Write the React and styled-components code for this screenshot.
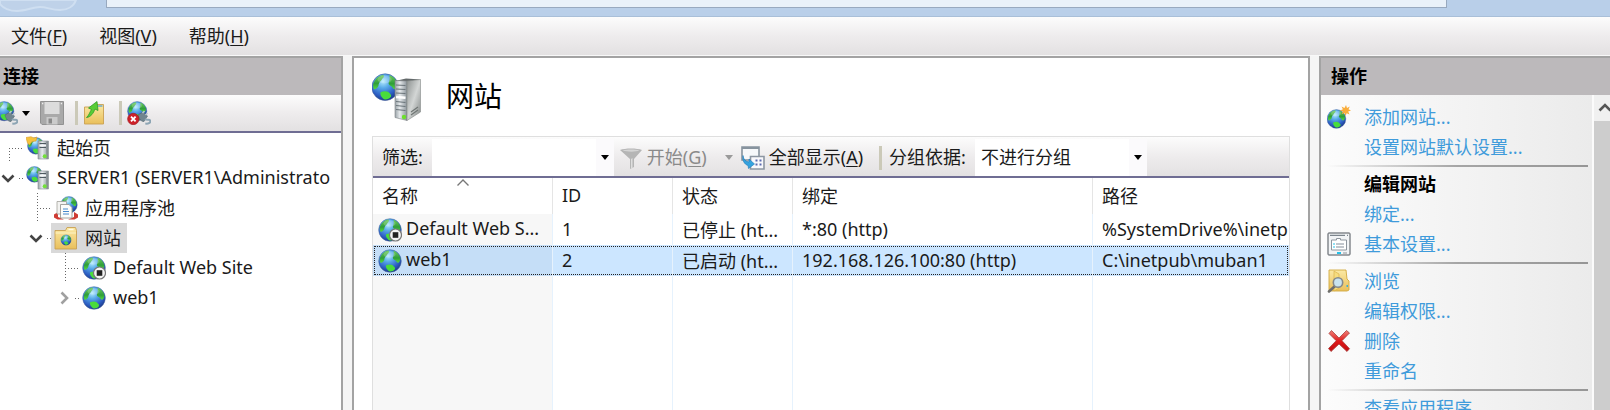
import React, {useState} from "react"
import styled, {createGlobalStyle} from "styled-components"

const GlobalStyle = createGlobalStyle`
  * { box-sizing:border-box; }
  body {
    margin:0;
    background:#f5f5f5;
    overflow:hidden;
  }
  body, button, input, select {
    font-family:"Noto Sans", "Noto Sans CJK SC", sans-serif;
    font-size:18px;
    color:#1a1a1a;
  }
  button {
    border:0;
    padding:0;
    background:none;
  }
  u {
    text-underline-offset:2px;
    text-decoration-thickness:1px;
  }
  svg {
    display:block;
    flex:none;
  }
`

const chrome = "linear-gradient(#fcfcfc, #eeeced 50%, #e3e1e2)"

const Window = styled.div`
  height:100vh;
  display:flex;
  flex-direction:column;
  overflow:hidden;
`
const AddressBar = styled.header`
  flex:none;
  height:17px;
  display:flex;
  align-items:flex-start;
  background:#b9cfe9;
  border-bottom:1px solid #a9bfd8;
`
const NavShape = styled.svg`
  margin-right:28px;
`
const Address = styled.div`
  flex:1;
  height:8px;
  margin-right:163px;
  background:#e9f1f9;
  border:1px solid #98a9bf;
  border-width:0 1px 1px;
`
const MenuBar = styled.nav`
  flex:none;
  height:38px;
  padding:0 11px 3px;
  display:flex;
  align-items:center;
  gap:32px;
  background:${chrome};
`
const Panels = styled.main`
  flex:1;
  min-height:0;
  display:flex;
  gap:9px;
  border-top:1px solid #f8f8f8;
`
const Side = styled.section`
  flex:none;
  width:${({$width})=>$width};
  display:flex;
  flex-direction:column;
  overflow:hidden;
  background:white;
  border:2px solid #a3a3a3;
  border-bottom:0;
  border-${({$open})=>$open}:0;
`
const PanelTitle = styled.h2`
  flex:none;
  height:37px;
  margin:0;
  padding:0 ${({$pad})=>$pad};
  background:#bcb9bb;
  color:black;
  font-size:18px;
  font-weight:700;
  line-height:36px;
`
const Caption = styled.span`
  padding-bottom:3px;
`

/* connections */
const TreeTools = styled.div`
  flex:none;
  height:38px;
  display:flex;
  align-items:center;
  margin-left:-6px;
  background:${chrome};
  border-bottom:2px solid #6f6d93;
`
const ToolButton = styled.button`
  display:flex;
  align-items:center;
  gap:4px;
  margin-right:${({$after})=>$after || "0px"};
`
const Separator = styled.span`
  flex:none;
  width:3px;
  height:24px;
  margin-right:${({$after})=>$after};
  background:#cbc9b8;
`
const Tree = styled.ul`
  margin:0;
  padding:0;
  list-style:none;
`
const TreeRow = styled.li`
  height:30px;
  display:flex;
  padding-left:${({$level})=>$level === 2 ? "56px" : $level === 1 ? "28px" : "0px"};
`
const Elbow = styled.span`
  flex:none;
  width:14px;
  margin-left:9px;
  background:
    repeating-linear-gradient(90deg, #666 0 1px, transparent 1px 3px) 0 50% / 100% 1px no-repeat,
    repeating-linear-gradient(#666 0 1px, transparent 1px 3px) 0 100% / 1px ${({$first})=>$first ? "50%" : "100%"} no-repeat;
`
const Toggle = styled.button`
  flex:none;
  width:23px;
  padding-left:1px;
  display:flex;
  align-items:center;
  background:repeating-linear-gradient(90deg, #666 0 1px, transparent 1px 3px) 100% 50% / 4px 1px no-repeat;
`
const TreeLabel = styled.button`
  display:flex;
  align-items:center;
  gap:7px;
  padding:0 6px 0 3px;
  white-space:nowrap;
  background:${({$selected})=>$selected ? "#d9d9d9" : "none"};
`

/* sites */
const Content = styled.section`
  flex:1;
  min-width:0;
  display:flex;
  flex-direction:column;
  padding:0 18px;
  background:white;
  border:2px solid #a3a3a3;
  border-bottom:0;
`
const Heading = styled.div`
  flex:none;
  height:78px;
  display:flex;
  align-items:center;
  gap:24px;
`
const PageTitle = styled.h1`
  margin:0;
  padding-bottom:3px;
  font-size:28px;
  line-height:36px;
  font-weight:400;
  color:black;
`
const ListBox = styled.div`
  flex:1;
  min-height:0;
  display:flex;
  flex-direction:column;
  border:1px solid #dfdfdf;
  border-bottom:0;
`
const FilterBar = styled.div`
  flex:none;
  height:41px;
  display:flex;
  align-items:center;
  padding:2px 0 0 9px;
  white-space:nowrap;
  background:${chrome};
  border-bottom:2px solid #6f6d93;
`
const FilterLabel = styled.label`
  margin-right:9px;
  padding-bottom:3px;
`
const Combo = styled.div`
  align-self:stretch;
  flex:none;
  display:flex;
  width:${({$width})=>$width};
  margin-right:${({$after})=>$after};
  background:white;
`
const FilterInput = styled.input`
  flex:1;
  min-width:0;
  border:0;
  padding:0 6px;
  background:white;
`
const ComboArrow = styled.button`
  flex:none;
  width:18px;
  display:flex;
  align-items:center;
  justify-content:center;
  background:#fbfafc;
`
const GroupSelect = styled.select`
  flex:1;
  border:0;
  padding:0 6px 2px;
  appearance:none;
  background:white;
`
const FilterButton = styled.button`
  display:flex;
  align-items:center;
  gap:4px;
  margin-right:${({$after})=>$after};
  color:${({disabled})=>disabled ? "#8a8a8a" : "#1a1a1a"};
`
const TableWrap = styled.div`
  flex:1;
  min-height:0;
  overflow:hidden;
  display:grid;
`
const Table = styled.table`
  width:100%;
  height:100%;
  table-layout:fixed;
  border-collapse:separate;
  border-spacing:0;
`
const Col = styled.col`
  width:${({$width})=>$width};
`
const HeadCell = styled.th`
  position:relative;
  height:36px;
  padding:0 9px 2px;
  text-align:left;
  font-weight:400;
  border-right:1px solid #e5e5e5;
  &:last-child { border-right:0; }
`
const SortMark = styled.svg`
  position:absolute;
  top:1px;
  left:calc(50% - 6px);
`
const SiteRow = styled.tr`
  height:${({$filler})=>$filler ? "auto" : "31px"};
  background:${({$selected})=>$selected ? "#cce6ff" : "white"};
  outline:${({$selected})=>$selected ? "1px dotted #222" : "none"};
  outline-offset:-2px;
`
const Cell = styled.td`
  padding:0 0 2px 9px;
  overflow:hidden;
  white-space:nowrap;
  border-right:1px solid #e6f2fd;
  &:last-child { border-right:0; }
  &:first-child {
    padding:0 0 0 5px;
    background:rgba(0, 0, 0, 0.03);
  }
`
const SiteName = styled.span`
  display:flex;
  align-items:center;
  gap:4px;
`

/* actions */
const ActionBody = styled.div`
  flex:1;
  min-height:0;
  display:flex;
  overflow:hidden;
`
const ActionList = styled.div`
  flex:1;
  min-width:0;
  padding:7px 4px 0 6px;
  background:linear-gradient(90deg, #fcfcfc, #ebebeb);
`
const ActionRow = styled.div`
  height:30px;
  display:grid;
  grid-template-columns:24px 1fr;
  gap:13px;
  align-items:center;
  white-space:nowrap;
`
const ActionLink = styled.a`
  padding-bottom:2px;
  color:#3f9bdb;
  text-decoration:none;
`
const ActionHeading = styled.strong`
  padding-bottom:2px;
  color:black;
`
const Divider = styled.hr`
  height:2px;
  margin:3px 0 2px;
  border:0;
  background:linear-gradient(90deg, transparent, #a5a5a5 50%, #969696);
`
const ScrollBar = styled.div`
  flex:none;
  width:18px;
  border-left:2px solid #fbfbfb;
  background:#cdcdcd;
`
const ScrollUp = styled.button`
  width:22px;
  height:26px;
  display:flex;
  align-items:center;
  justify-content:center;
  background:#f0f0f0;
`

/* drawings */
const Defs = () => (
  <svg width="0" height="0" style={{position: "absolute"}} aria-hidden="true">
    <defs>
      <radialGradient id="sea" cx="42%" cy="28%" r="72%">
        <stop offset="0" stopColor="#b4ebfd" />
        <stop offset="0.35" stopColor="#58aae9" />
        <stop offset="0.75" stopColor="#2d5fc4" />
        <stop offset="1" stopColor="#1d3a8c" />
      </radialGradient>
      <linearGradient id="land" x1="0" y1="0" x2="0" y2="1">
        <stop offset="0" stopColor="#6ccb5a" />
        <stop offset="0.6" stopColor="#2f9e3a" />
        <stop offset="1" stopColor="#55dd3f" />
      </linearGradient>
      <linearGradient id="steel" x1="0" y1="0" x2="1" y2="1">
        <stop offset="0" stopColor="#8d9291" />
        <stop offset="0.5" stopColor="#d3d6d5" />
        <stop offset="1" stopColor="#7f8483" />
      </linearGradient>
      <linearGradient id="face" x1="0" y1="0" x2="1" y2="0">
        <stop offset="0" stopColor="#9aa3a8" />
        <stop offset="0.4" stopColor="#e6eaec" />
        <stop offset="1" stopColor="#8b949a" />
      </linearGradient>
      <linearGradient id="paper" x1="0" y1="0" x2="0" y2="1">
        <stop offset="0" stopColor="#fbe9a4" />
        <stop offset="1" stopColor="#e9bf5b" />
      </linearGradient>
      <linearGradient id="red" x1="0" y1="0" x2="0" y2="1">
        <stop offset="0" stopColor="#f08078" />
        <stop offset="0.5" stopColor="#e01b1b" />
        <stop offset="1" stopColor="#c00c10" />
      </linearGradient>
    </defs>
  </svg>
)

const Ball = () => (
  <g>
    <circle cx="12" cy="12" r="11.300" fill="url(#sea)" stroke="#3c5c9a" strokeWidth="0.5" />
    <path d="M1.800 9.500C3.200 5 6.500 2 10.500 1.600c1 1 .2 2.600-1 3.300-.6 1.500-1.600 2-2.600 3.600-.8 1.300-.2 2.900-1.600 3.900-1.200.6-1.900 2-2.900 1.200-.6-1.300-.6-3-.6-4.100z" fill="url(#land)" />
    <path d="M15.500 1.800c3.500 1.200 6.400 4.200 7 8-.5 2-1.300 4-2.600 4-1.400-.2-1.600-2.100-3-2.700-1.600-.7-2.500-2-1.700-3.600.8-1.500.7-3.600.3-5.700z" fill="url(#land)" />
    <path d="M8.200 16.300c2-1.100 5-1.200 6.500-.1 1.100 1.300 3 2.200 2.200 4-1.500 1.900-4.100 2.600-5.700 2-1.900-1-3.900-3.900-3-5.900z" fill="#49dc3c" />
    <ellipse cx="11.500" cy="5.500" rx="6" ry="3.300" fill="white" opacity="0.2" />
  </g>
)

const Tower = () => (
  <g>
    <path d="M12 5h10.500v18H12z" fill="url(#face)" stroke="#868e93" strokeWidth="0.600" />
    <path d="M13.500 7.500h6.500M13.500 11.500h6.500" stroke="#4e5a61" strokeWidth="1.100" />
    <path d="M13.500 9.500h6.500" stroke="#f5f7f8" strokeWidth="1.200" />
    <path d="M21 5.500v17" stroke="#6f797e" strokeWidth="0.900" />
    <circle cx="18.700" cy="20.300" r="2" fill="#72e03a" />
  </g>
)

const Icon = ({kind, size = 24}) => (
  <svg width={size} height={size} viewBox="0 0 24 24" aria-hidden="true">
    {kind === "globe" && <Ball />}
    {kind === "stopped" && <g>
      <Ball />
      <circle cx="17.500" cy="17" r="6" fill="#f4f4f4" stroke="#777" strokeWidth="1.200" />
      <path d="M14.700 14.200h5.600v5.600h-5.600z" fill="#222" />
    </g>}
    {kind === "newSite" && <g>
      <g transform="translate(-0.500 4) scale(0.830)"><Ball /></g>
      <path d="M19 0l1 3 2.800-1.500-1.300 2.800L24 5.500l-2.800 1L22.500 9.500l-2.800-1.300L18.500 11l-1-3-3 1.300 1.400-2.800L13 5.500l2.900-1.200L14.500 1.500 17.500 3z" fill="#f9ad3c" />
    </g>}
    {kind === "start" && <g>
      <g transform="translate(1 1) scale(0.740)"><Ball /></g>
      <path d="M0 1.500l5-.8 3 1.300 3-1-1 4-4 .5-2.500 3.500L1.500 7z" fill="#f5c23c" stroke="#dc9a2a" strokeWidth="0.600" />
      <Tower />
    </g>}
    {kind === "server" && <g>
      <g transform="scale(0.700)"><Ball /></g>
      <Tower />
    </g>}
    {kind === "pool" && <g>
      <g transform="translate(6 0) scale(0.740)"><Ball /></g>
      <path d="M0 18.500l4-2.500v5l6 2.500H3.500L0 21.500zM24 18.500L20 16v5l-6 2.500h6.500l3.500-2z" fill="#cf3b33" />
      <path d="M3 5.500h9.500V18H3z" fill="#f3f3f1" stroke="#a3a29d" strokeWidth="0.800" />
      <path d="M6.500 8.500h8.500l3 3V22H6.500z" fill="#fcfcfa" stroke="#9b9a95" strokeWidth="0.900" />
      <path d="M9 13h5M9 15.500h6M9 18h6" stroke="#4688cc" strokeWidth="1.200" />
    </g>}
    {kind === "sites" && <g>
      <path d="M1 4.500h10.500l1.500-3h8.500l1 3V23H1z" fill="url(#paper)" stroke="#c9a052" strokeWidth="0.900" />
      <path d="M14.500 3.500h5" stroke="#fffbe5" strokeWidth="1.400" />
      <path d="M1.500 7h20.500" stroke="#fdf3c4" strokeWidth="1" />
      <g transform="translate(6.500 8.500) scale(0.460)"><Ball /></g>
    </g>}
    {(kind === "connect" || kind === "disconnect") && <g>
      <g transform="scale(0.850)"><Ball /></g>
      <path d="M11 14l5-3 4.500 4-3.500 5.500c-3 0-5-2.500-6-6.500z" fill="#70858f" stroke="#51646e" strokeWidth="0.600" />
      <path d="M18.500 14l2-2M15.500 12l2-2" stroke="#b9c6cc" strokeWidth="1.600" />
      <path d="M18 18c2 2 5-.5 5.300 2 .2 2-2 3-5 2.500" fill="none" stroke="#8da5b4" strokeWidth="2" />
    </g>}
    {kind === "disconnect" && <g>
      <circle cx="6.300" cy="18" r="5.700" fill="#cc2129" stroke="#9f1219" strokeWidth="0.600" />
      <path d="M4 15.700l4.600 4.600M8.600 15.700l-4.600 4.600" stroke="white" strokeWidth="1.900" />
    </g>}
    {kind === "save" && <g>
      <path d="M.5.500h23v23H2l-1.500-1.500z" fill="#a9a9a9" stroke="#929292" />
      <path d="M4.500 1h15v12h-15z" fill="#dcdcdc" />
      <path d="M6.500 16h11v7.500h-11z" fill="#cbcbcb" />
      <path d="M8.500 17.500h3.500v5H8.500z" fill="#8a8a8a" />
      <path d="M2 2.500h1.300M20.800 2.500h1.300" stroke="#eee" strokeWidth="1.400" />
    </g>}
    {kind === "up" && <g>
      <path d="M1.500 6h8l1.500-2.500h9.500V23h-19z" fill="url(#paper)" stroke="#c9a052" strokeWidth="0.900" />
      <path d="M15 5h4.500" stroke="#4b9bd5" strokeWidth="1.200" />
      <path d="M3.500 16.500C6 14.500 6.500 11.500 8.500 8.500L5.500 7l8.500-6.500 1 9-3-1.500c-1.500 4-4 8-8.500 8.500z" fill="#58cd36" stroke="#2e9c28" strokeWidth="0.800" />
    </g>}
    {kind === "funnel" && <g>
      <path d="M1 4c5-2 17-2 22 0l-8 9v8l-4 2V13z" fill="#b5b5b5" />
      <path d="M3.500 4.500c5-1.200 12-1.200 17 0-4 1.500-12 1.500-17 0z" fill="#d4d4d4" />
      <path d="M12 13l1.500-1v10l-1.500.800z" fill="#dedede" />
    </g>}
    {kind === "showAll" && <g>
      <path d="M1 1h17v13H1z" fill="#f6f8fa" stroke="#87939e" strokeWidth="1.600" />
      <path d="M1 2h17" stroke="#87939e" strokeWidth="2" />
      <path d="M9.500 10.500h13.500v12.500h-13.500z" fill="#f8f8fb" stroke="#8d96a2" strokeWidth="1.600" />
      <path d="M14.500 14.500h7M14.500 18.500h7" stroke="#5b6aaf" strokeWidth="2" strokeDasharray="2 2" />
      <path d="M2 9.500c.5 4 2.500 6 6 6.500V13l5.500 5-6 4.500-.5-3C3.500 18.500 1 14.500 2 9.500z" fill="#35a3de" stroke="#1d79b8" strokeWidth="0.600" />
    </g>}
    {kind === "settings" && <g>
      <path d="M2 1h20l1 1v20l-1 1H2l-1-1V2z" fill="#f2f4f6" stroke="#85898e" strokeWidth="1.500" />
      <path d="M3 3.300h15M20 3.300h1" stroke="#7c858d" strokeWidth="1.200" />
      <path d="M4.500 8h5V6.500h4V8h6v10h-15z" fill="white" stroke="#8e969e" strokeWidth="1" />
      <path d="M9 12h8M9 15h8" stroke="#85909b" strokeWidth="1.200" />
      <path d="M6.500 12h1M6.500 15h1M10 21h4" stroke="#22c1ea" strokeWidth="2" />
      <path d="M16 21h4" stroke="#aeb5ba" strokeWidth="1.500" />
    </g>}
    {kind === "browse" && <g>
      <path d="M2 1h17l1 9 2 2v9l-2 1H2z" fill="url(#paper)" stroke="#d1a93f" strokeWidth="0.900" />
      <path d="M7 2v20l5-3V5z" fill="#f6dc7e" stroke="#d5ad45" strokeWidth="0.600" />
      <path d="M19.500 17h1.500" stroke="#3faed4" strokeWidth="2" />
      <path d="M7.500 17.500L2 22.500" stroke="#6e6e6c" strokeWidth="2.600" strokeLinecap="round" />
      <circle cx="11" cy="13.500" r="4.700" fill="#c8e3f0" stroke="#85898b" strokeWidth="1.600" />
    </g>}
    {kind === "delete" && <path d="M2 4.500l2.500-3L12 9l7.500-7.500 3 2.500-7.500 7.700 7.500 8-2.500 2.800-8-7.500-8 7.500-2.500-3 7.700-7.800z" fill="url(#red)" stroke="#a8423d" strokeWidth="0.800" strokeLinejoin="round" />}
  </svg>
)

const BigServer = () => (
  <svg width="50" height="50" viewBox="0 0 50 50" aria-hidden="true">
    <g transform="translate(-1 1) scale(1.180)"><Ball /></g>
    <path d="M23 9l11-2.500L49 7.500 35 10z" fill="#63696a" />
    <path d="M23 8.500l12 .500v39.500l-12-3z" fill="url(#face)" stroke="#7c8284" strokeWidth="0.600" />
    <path d="M35 9l13.500-1.500V40L35 48.500z" fill="url(#steel)" stroke="#848988" strokeWidth="0.600" />
    <path d="M24 13l9.500.5M24 17l9.500.5M24 21l9.500.5M24 29.500l9.500 1M24 33.500l9.500 1M24 37.500l9.500 1" stroke="#6b757a" strokeWidth="1.200" />
    <path d="M24 25l9.500.700" stroke="white" strokeWidth="2.500" />
    <path d="M39 40l7-5M39 43l7-5" stroke="#707675" strokeWidth="1.200" />
    <circle cx="32" cy="45" r="2.200" fill="#6cdf2d" />
  </svg>
)

const Chevron = ({dir = "down", color = "#444", width = 2.6}) => {
  const turn = {down: 0, up: 180, right: -90}[dir]
  return (
    <svg width="14" height="14" viewBox="0 0 14 14" aria-hidden="true">
      <path d="M1.500 4.500L7 10l5.500-5.500" transform={`rotate(${turn} 7 7)`} fill="none" stroke={color} strokeWidth={width} />
    </svg>
  )
}

const Arrow = ({color = "#000"}) => (
  <svg width="8" height="5" viewBox="0 0 8 5" aria-hidden="true">
    <path d="M0 0h8L4 5z" fill={color} />
  </svg>
)

const menus = [["文件", "F"], ["视图", "V"], ["帮助", "H"]]

const treedata = [
  {title: "起始页", icon: "start", level: 0, first: true},
  {title: "SERVER1 (SERVER1\\Administrato", icon: "server", level: 0, toggle: "down"},
  {title: "应用程序池", icon: "pool", level: 1},
  {title: "网站", icon: "sites", level: 1, toggle: "down"},
  {title: "Default Web Site", icon: "stopped", level: 2},
  {title: "web1", icon: "globe", level: 2, toggle: "right"},
]

const columns = [
  {title: "名称", width: "180px", sorted: true},
  {title: "ID", width: "120px"},
  {title: "状态", width: "120px"},
  {title: "绑定", width: "300px"},
  {title: "路径", width: "auto"},
]

const sites = [
  {icon: "stopped", name: "Default Web S...", id: 1, state: "已停止 (ht...", binding: "*:80 (http)", path: "%SystemDrive%\\inetp"},
  {icon: "globe", name: "web1", id: 2, state: "已启动 (ht...", binding: "192.168.126.100:80 (http)", path: "C:\\inetpub\\muban1"},
]

const actions = [
  {title: "添加网站...", icon: "newSite"},
  {title: "设置网站默认设置..."},
  {divider: true},
  {title: "编辑网站", heading: true},
  {title: "绑定..."},
  {title: "基本设置...", icon: "settings"},
  {divider: true},
  {title: "浏览", icon: "browse"},
  {title: "编辑权限..."},
  {title: "删除", icon: "delete"},
  {title: "重命名"},
  {divider: true},
  {title: "查看应用程序"},
]

const Connections = () => {
  const [selected, setSelected] = useState("网站")

  return (
    <Side $width="343px" $open="left">
      <PanelTitle $pad="3px">连接</PanelTitle>
      <TreeTools>
        <ToolButton $after="10px" aria-label="连接"><Icon kind="connect" /><Arrow /></ToolButton>
        <ToolButton $after="11px" aria-label="保存"><Icon kind="save" /></ToolButton>
        <Separator $after="5px" />
        <ToolButton $after="12px" aria-label="向上"><Icon kind="up" /></ToolButton>
        <Separator $after="5px" />
        <ToolButton aria-label="断开"><Icon kind="disconnect" /></ToolButton>
      </TreeTools>
      <Tree>
        {treedata.map((node) => (
          <TreeRow key={node.title} $level={node.level}>
            {node.toggle
              ? <Toggle aria-label={node.title}><Chevron dir={node.toggle} color={node.toggle === "down" ? "#444" : "#a0a0a0"} /></Toggle>
              : <Elbow $first={node.first} />}
            <TreeLabel $selected={selected === node.title} onClick={() => setSelected(node.title)}>
              <Icon kind={node.icon} />
              <Caption>{node.title}</Caption>
            </TreeLabel>
          </TreeRow>
        ))}
      </Tree>
    </Side>
  )
}

const Sites = () => {
  const [current, setCurrent] = useState(2)

  return (
    <Content>
      <Heading>
        <BigServer />
        <PageTitle>网站</PageTitle>
      </Heading>
      <ListBox>
        <FilterBar>
          <FilterLabel htmlFor="filter">筛选:</FilterLabel>
          <Combo $width="182px" $after="5px">
            <FilterInput id="filter" />
            <ComboArrow aria-label="筛选历史"><Arrow /></ComboArrow>
          </Combo>
          <FilterButton disabled $after="18px"><Icon kind="funnel" /><Caption>开始(<u>G</u>)</Caption></FilterButton>
          <FilterButton disabled $after="8px" aria-label="开始选项"><Arrow color="#9a9a9a" /></FilterButton>
          <FilterButton $after="16px"><Icon kind="showAll" /><Caption>全部显示(<u>A</u>)</Caption></FilterButton>
          <Separator $after="7px" />
          <FilterLabel htmlFor="group">分组依据:</FilterLabel>
          <Combo $width="172px" $after="0px">
            <GroupSelect id="group"><option>不进行分组</option></GroupSelect>
            <ComboArrow tabIndex={-1} aria-label="展开"><Arrow /></ComboArrow>
          </Combo>
        </FilterBar>
        <TableWrap>
          <Table>
            <colgroup>
              {columns.map((c) => <Col key={c.title} $width={c.width} />)}
            </colgroup>
            <thead>
              <tr>
                {columns.map((c) => (
                  <HeadCell key={c.title}>
                    {c.title}
                    {c.sorted && <SortMark width="12" height="7" viewBox="0 0 12 7"><path d="M.5 6.500L6 1l5.500 5.500" fill="none" stroke="#777" strokeWidth="1.400" /></SortMark>}
                  </HeadCell>
                ))}
              </tr>
            </thead>
            <tbody>
              {sites.map((s) => (
                <SiteRow key={s.id} $selected={current === s.id} onClick={() => setCurrent(s.id)}>
                  <Cell><SiteName><Icon kind={s.icon} /><Caption>{s.name}</Caption></SiteName></Cell>
                  <Cell>{s.id}</Cell>
                  <Cell>{s.state}</Cell>
                  <Cell>{s.binding}</Cell>
                  <Cell>{s.path}</Cell>
                </SiteRow>
              ))}
              <SiteRow $filler aria-hidden="true">
                {columns.map((c) => <Cell key={c.title} />)}
              </SiteRow>
            </tbody>
          </Table>
        </TableWrap>
      </ListBox>
    </Content>
  )
}

const Actions = () => (
  <Side $width="291px" $open="right">
    <PanelTitle $pad="10px">操作</PanelTitle>
    <ActionBody>
      <ActionList>
        {actions.map((a, index) => a.divider
          ? <Divider key={index} />
          : (
            <ActionRow key={index}>
              {a.icon ? <Icon kind={a.icon} /> : <span />}
              {a.heading ? <ActionHeading>{a.title}</ActionHeading> : <ActionLink href="#">{a.title}</ActionLink>}
            </ActionRow>
          )
        )}
      </ActionList>
      <ScrollBar>
        <ScrollUp aria-label="向上滚动"><Chevron dir="up" color="#555" /></ScrollUp>
      </ScrollBar>
    </ActionBody>
  </Side>
)

const App = () => {
  return (
    <Window>
      <GlobalStyle />
      <Defs />
      <AddressBar>
        <NavShape width="78" height="13" viewBox="0 0 78 13" aria-hidden="true">
          <path d="M0 0h76c-2 6-8 10-16 10-9 0-13-3-20-3S26 11 17 11C9 11 3 8 0 4z" fill="#bfd2e9" stroke="#cfdff1" strokeWidth="2" />
        </NavShape>
        <Address />
      </AddressBar>
      <MenuBar>
        {menus.map(([name, letter]) => <button key={letter}>{name}(<u>{letter}</u>)</button>)}
      </MenuBar>
      <Panels>
        <Connections />
        <Sites />
        <Actions />
      </Panels>
    </Window>
  )
}

export default App
